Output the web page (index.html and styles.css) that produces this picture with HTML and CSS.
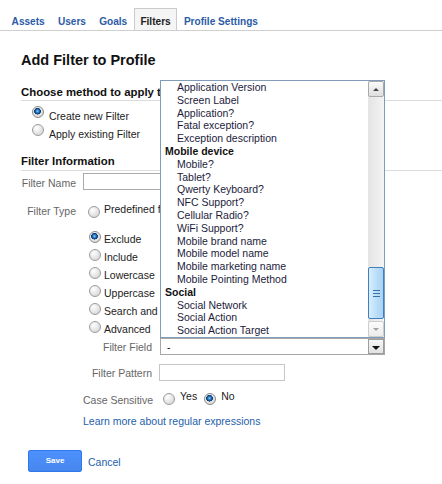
FILE: index.html
```html
<!DOCTYPE html>
<html lang="en">
<head>
<meta charset="utf-8">
<title>Add Filter to Profile</title>
<link rel="stylesheet" href="styles.css">
</head>
<body>
<nav class="tabs">
  <a class="tab" href="#">Assets</a>
  <a class="tab" href="#">Users</a>
  <a class="tab" href="#">Goals</a>
  <a class="tab active" href="#">Filters</a>
  <a class="tab" href="#">Profile Settings</a>
</nav>
<main class="content">
  <h1 class="title">Add Filter to Profile</h1>
  <h2 class="section">Choose method to apply to Profile</h2>
  <div class="method">
    <label class="opt"><input type="radio" name="method" checked><span>Create new Filter</span></label>
    <label class="opt"><input type="radio" name="method"><span>Apply existing Filter</span></label>
  </div>
  <h2 class="section info">Filter Information</h2>
  <div class="form">
    <div class="frow name">
      <span class="lbl">Filter Name</span>
      <input class="text name-input" type="text">
    </div>
    <div class="frow type">
      <span class="lbl">Filter Type</span>
      <div class="type-ctl">
        <div class="type-choice">
          <input type="radio" name="ftype"><span class="up">Predefined filter</span>
          <input type="radio" name="ftype" checked><span class="up">Custom filter</span>
        </div>
        <div class="opts">
          <label class="opt"><input type="radio" name="kind" checked><span>Exclude</span></label>
          <label class="opt"><input type="radio" name="kind"><span>Include</span></label>
          <label class="opt"><input type="radio" name="kind"><span>Lowercase</span></label>
          <label class="opt"><input type="radio" name="kind"><span>Uppercase</span></label>
          <label class="opt"><input type="radio" name="kind"><span>Search and Replace</span></label>
          <label class="opt"><input type="radio" name="kind"><span>Advanced</span></label>
        </div>
        <div class="sub">
          <div class="srow">
            <span class="slbl">Filter Field</span>
            <div class="select">
              <span class="value">-</span>
              <span class="sel-btn"><span class="tri-down"></span></span>
              <div class="listbox">
                <ul class="items">
                  <li class="item">Application Version</li>
                  <li class="item">Screen Label</li>
                  <li class="item">Application?</li>
                  <li class="item">Fatal exception?</li>
                  <li class="item">Exception description</li>
                  <li class="group">Mobile device</li>
                  <li class="item">Mobile?</li>
                  <li class="item">Tablet?</li>
                  <li class="item">Qwerty Keyboard?</li>
                  <li class="item">NFC Support?</li>
                  <li class="item">Cellular Radio?</li>
                  <li class="item">WiFi Support?</li>
                  <li class="item">Mobile brand name</li>
                  <li class="item">Mobile model name</li>
                  <li class="item">Mobile marketing name</li>
                  <li class="item">Mobile Pointing Method</li>
                  <li class="group">Social</li>
                  <li class="item">Social Network</li>
                  <li class="item">Social Action</li>
                  <li class="item">Social Action Target</li>
                </ul>
                <div class="scrollbar">
                  <span class="sb-btn"><span class="tri-up"></span></span>
                  <div class="track">
                    <span class="thumb"><span class="grip"></span></span>
                  </div>
                  <span class="sb-btn off"><span class="tri-dn"></span></span>
                </div>
              </div>
            </div>
          </div>
          <div class="srow pattern">
            <span class="slbl">Filter Pattern</span>
            <input class="text pattern-input" type="text">
          </div>
          <div class="srow case">
            <span class="slbl">Case Sensitive</span>
            <div class="yesno">
              <input type="radio" name="case"><span class="up">Yes</span>
              <input type="radio" name="case" checked><span class="up">No</span>
            </div>
          </div>
        </div>
        <a class="learn" href="#">Learn more about regular expressions</a>
      </div>
    </div>
  </div>
  <div class="actions">
    <button class="save" type="button">Save</button>
    <a class="cancel" href="#">Cancel</a>
  </div>
</main>
</body>
</html>
```
FILE: styles.css
```css
* { box-sizing: border-box; }

body {
  margin: 0;
  width: 442px;
  height: 484px;
  overflow: hidden;
  background: #fff;
  color: #222;
  font-family: "Liberation Sans", Arial, sans-serif;
  font-size: 10.5px;
}

/* Tabs */
.tabs {
  display: flex;
  height: 31px;
  padding: 8px 0 0 5px;
  border-bottom: 1px solid #cfcfcf;
}
.tab {
  display: flex;
  align-items: center;
  height: 22px;
  padding: 3px 5.6px 0;
  border: 1px solid transparent;
  border-bottom: 0;
  font-size: 10.1px;
  font-weight: bold;
  color: #2b5ca6;
  text-decoration: none;
}
.tab.active {
  border-color: #cbcbcb;
  background: #f5f5f5;
  color: #222;
}

/* Content */
.content { padding-left: 21px; }

.title {
  margin: 20px 0 0;
  font-size: 14.5px;
  line-height: 18px;
  font-weight: bold;
  color: #111;
}
.section {
  margin: 16px 0 0;
  padding-bottom: 1px;
  border-bottom: 1px solid #dcdcdc;
  font-size: 11.4px;
  line-height: 14px;
  font-weight: bold;
  color: #111;
  white-space: nowrap;
}
.section.info { margin-top: 11px; padding-bottom: 2px; }

/* Radios */
input[type="radio"] {
  appearance: none;
  -webkit-appearance: none;
  flex: none;
  width: 12px;
  height: 12px;
  margin: 0;
  border: 1px solid #9b9b9b;
  border-radius: 50%;
  background: radial-gradient(circle at 35% 30%, #ffffff 0, #eeeeee 35%, #cfcfcf 100%);
}
input[type="radio"]:checked {
  border-color: #8a8a8a;
  background:
    radial-gradient(circle at 45% 42%, #9cd0ff 0, #2f83d0 1.4px, #0d4a88 2.6px, #13365e 3.2px, transparent 3.5px),
    radial-gradient(circle at 35% 30%, #ffffff 0, #eeeeee 35%, #cfcfcf 100%);
}

.opt {
  display: flex;
  align-items: center;
  height: 18px;
  color: #222;
}

.method { margin-top: 6px; }
.method .opt input { margin: 0 5px 8px 11px; }

/* Form */
.form { margin-top: 2px; }
.frow {
  display: grid;
  grid-template-columns: 55px auto;
  column-gap: 7px;
  align-items: start;
}
.lbl {
  color: #666;
  text-align: right;
  white-space: nowrap;
}
.frow.name .lbl { line-height: 17px; padding-top: 2px; }
.text {
  height: 17px;
  margin: 0;
  padding: 0 3px;
  border: 1px solid #ababab;
  background: #fff;
  font: inherit;
}
.name-input { width: 250px; }

.frow.type { margin-top: 11px; }
.frow.type .lbl { line-height: 16px; }

.type-choice {
  display: flex;
  align-items: center;
  height: 18px;
}
.type-choice input { margin: 0 4px 0 5px; }
.up { margin-bottom: 7px; }
.type-choice .up { margin-right: 6px; }

.opts { margin-top: 8px; }
.opts .opt input { margin: 0 3px 2px 6px; }
.opts .opt span { padding-top: 1px; }

/* Sub fields */
.sub { margin-top: 1px; }
.srow {
  display: grid;
  grid-template-columns: 69px auto;
  column-gap: 8px;
  align-items: center;
}
.slbl {
  color: #666;
  text-align: right;
  white-space: nowrap;
  padding-top: 1px;
}
.srow.pattern { margin-top: 9px; }
.srow.case { margin-top: 9px; height: 18px; }
.pattern-input { width: 126px; margin-left: -1px; border-color: #c6c6c6; }

.select {
  position: relative;
  display: flex;
  align-items: center;
  width: 225px;
  height: 17px;
  padding-left: 6px;
  border: 1px solid #a7a7a7;
  background: #fff;
  color: #111;
}
.value { flex: 1; }
.sel-btn {
  display: flex;
  align-items: center;
  justify-content: center;
  width: 16px;
  height: 15px;
  border: 1px solid #9d9d9d;
  background: linear-gradient(#f7f7f7, #e2e2e2);
}
.tri-down {
  width: 0;
  height: 0;
  border-left: 4px solid transparent;
  border-right: 4px solid transparent;
  border-top: 4px solid #111;
  margin-top: 2px;
}

/* Open list */
.listbox {
  position: absolute;
  left: -1px;
  bottom: calc(100% + 1px);
  width: 225px;
  height: 258px;
  display: flex;
  border: 1px solid #7f9db9;
  background: #fff;
  overflow: hidden;
  z-index: 5;
}
.items {
  flex: 1;
  margin: 0;
  padding: 0;
  list-style: none;
  display: flex;
  flex-direction: column;
  overflow: hidden;
  color: #1c1c3c;
  font-size: 10.5px;
  line-height: 12.8px;
  white-space: nowrap;
}
.item { padding-left: 16px; flex: none; }
.group { padding-left: 4px; font-weight: bold; flex: none; color: #111; }

.scrollbar {
  display: flex;
  flex-direction: column;
  width: 16px;
  background: linear-gradient(to right, #e4e4e4, #f4f4f4);
}
.sb-btn {
  display: flex;
  align-items: center;
  justify-content: center;
  height: 16px;
  border: 1px solid #a9a9a9;
  border-radius: 2px;
  background: linear-gradient(#fbfbfb, #dedede);
}
.sb-btn.off {
  border-color: #cdcdcd;
  background: linear-gradient(#fbfbfb, #ececec);
}
.tri-up {
  width: 0;
  height: 0;
  border-left: 3px solid transparent;
  border-right: 3px solid transparent;
  border-bottom: 3px solid #444;
}
.tri-dn {
  width: 0;
  height: 0;
  border-left: 3px solid transparent;
  border-right: 3px solid transparent;
  border-top: 3px solid #a0a0a0;
}
.track {
  flex: 1;
  display: flex;
  flex-direction: column;
  justify-content: flex-end;
  padding-bottom: 2px;
}
.thumb {
  display: flex;
  align-items: center;
  justify-content: center;
  height: 52px;
  border: 1px solid #3f7fbf;
  border-radius: 2px;
  background: linear-gradient(to right, #d9eeff, #b8dcf8 60%, #a9d2f3);
}
.grip {
  width: 7px;
  height: 7px;
  background: repeating-linear-gradient(#3a72a8 0 1px, transparent 1px 3px);
}

.yesno {
  display: flex;
  align-items: center;
  height: 18px;
}
.yesno input { margin: 0 5px 0 3px; }
.yesno .up { margin-right: 4px; color: #222; }

.learn {
  display: block;
  margin-top: 6px;
  line-height: 14px;
  color: #2461aa;
  text-decoration: none;
}

/* Actions */
.actions {
  display: flex;
  align-items: center;
  margin-top: 22px;
  padding-left: 7px;
}
.save {
  width: 54px;
  height: 22px;
  margin: 0 6px 0 0;
  padding: 0 0 2px;
  border: 1px solid #3079ed;
  border-radius: 2px;
  background: linear-gradient(#4d90fe, #4787ed);
  color: #fff;
  font-family: "Liberation Sans", Arial, sans-serif;
  font-size: 8px;
  font-weight: bold;
}
.cancel {
  color: #2461aa;
  text-decoration: none;
  padding-top: 1px;
}
```
